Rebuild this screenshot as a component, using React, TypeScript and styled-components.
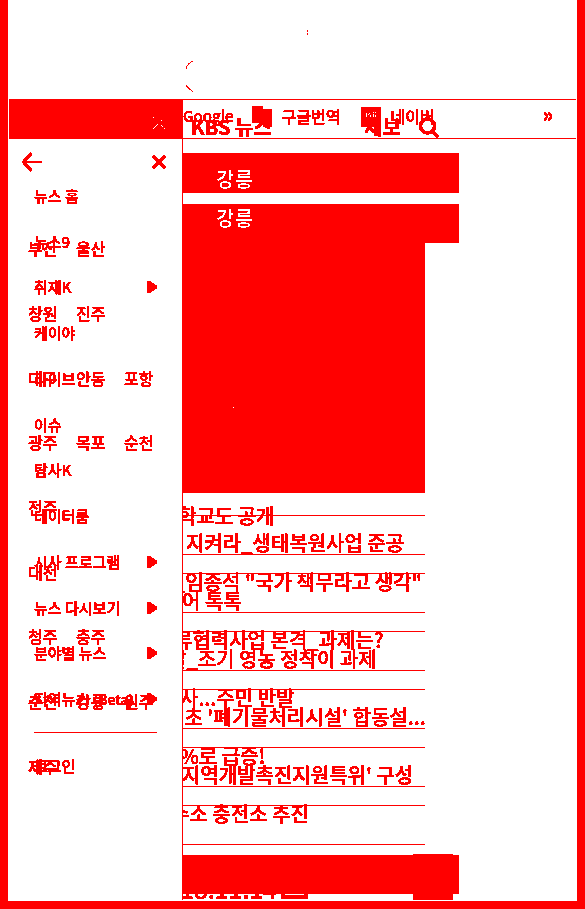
import React from "react";
import styled, { createGlobalStyle } from "styled-components";

const RED = "#ff0000";

const Global = createGlobalStyle`
  * { box-sizing: border-box; }
  body { margin: 0; background: #fff; }
  h1, h2, p, ul { margin: 0; padding: 0; font-weight: inherit; }
  ul { list-style: none; }
  a { color: inherit; text-decoration: none; }
  button { border: 0; padding: 0; background: none; color: inherit; font: inherit; display: flex; }
  svg { display: block; flex: none; }
`;

const Shell = styled.div`
  position: relative;
  display: flex;
  flex-direction: column;
  min-height: 100vh;
  overflow: hidden;
  padding: 0 1px 1px;
  border: solid ${RED};
  border-width: 0 8px 8px;
  background: #fff;
  color: ${RED};
  font-family: "Noto Sans CJK KR", "Noto Sans", sans-serif;
  font-weight: 500;
  filter: url(#two-tone);
`;

const Defs = styled.svg`
  position: absolute;
  width: 0;
  height: 0;
`;

const Masthead = styled.div`
  flex: none;
  height: 99px;
  padding: 30px 0 0 177px;
`;

const Toolbar = styled.header`
  position: relative;
  flex: none;
  display: flex;
  height: 40px;
  border: solid ${RED};
  border-width: 1px 0;
`;

const ToolbarPanel = styled.div`
  flex: none;
  width: 174px;
  padding: 17px 17px 0 0;
  display: flex;
  justify-content: flex-end;
  background: ${RED};
  color: #fff;
`;

const Translate = styled.nav`
  flex: 1;
  display: flex;
  align-items: center;
  height: 34px;
  font-size: 16px;
  line-height: 24px;
  white-space: nowrap;
`;

const TranslateLink = styled.a<{ $gap: number; $small?: boolean }>`
  height: 26px;
  margin-right: ${(p) => p.$gap}px;
  font-size: ${(p) => (p.$small ? 15 : 16)}px;
`;

const More = styled.button`
  && {
    height: 30px;
    margin: 0 23px 0 auto;
    font-size: 20px;
    font-weight: 700;
  }
`;

const Brand = styled.div`
  position: absolute;
  top: 12px;
  left: 182px;
  width: 248px;
  display: flex;
  align-items: center;
  font-size: 20px;
  line-height: 30px;
  white-space: nowrap;
`;

const BrandName = styled.h1`
  font-size: 20px;
  font-weight: 700;
`;

const Report = styled.a`
  margin: 0 18px 0 auto;
  font-weight: 700;
`;

const IconGap = styled.span`
  margin-right: 10px;
`;

const Content = styled.main`
  flex: 1;
  display: flex;
  flex-direction: column;
  min-height: 0;
  padding-top: 14px;
  margin-left: 174px;
  margin-right: 117px;
  white-space: nowrap;
`;

const Tab = styled.a<{ $top: number }>`
  flex: none;
  height: 40px;
  margin-bottom: 11px;
  padding: ${(p) => p.$top}px 0 0 33px;
  background: ${RED};
  color: #fff;
  font-size: 20px;
  font-weight: 700;
  line-height: 28px;
  overflow: hidden;
  &:nth-of-type(2) { margin-bottom: 0; height: 39px; }
`;

const Column = styled.div`
  height: 611px;
  margin-right: 34px;
`;

const Photo = styled.div`
  height: 250px;
  padding: 164px 0 0 50px;
  background: ${RED};
`;

const Dot = styled.div`
  width: 1px;
  height: 1px;
  background: #fff;
`;

const Lead = styled.p<{ $start: number }>`
  height: 22px;
  padding-top: 9px;
  margin-left: ${(p) => p.$start}px;
  font-size: 20px;
  line-height: 28px;
`;

const Story = styled.li<{ $single: boolean }>`
  height: 40px;
  margin-bottom: 18px;
  padding-top: ${(p) => (p.$single ? 19 : 0)}px;
  border: solid ${RED};
  border-width: 1px 0;
`;

const Line = styled.a<{ $start: number }>`
  display: block;
  height: 19px;
  margin-left: ${(p) => p.$start}px;
  font-size: 20px;
  line-height: 15px;
`;

const Footer = styled.footer`
  position: relative;
  flex: none;
  height: 46px;
  margin-left: 174px;
  overflow: hidden;
`;

const FooterBar = styled.div`
  position: absolute;
  top: 1px;
  left: 0;
  width: 276px;
  height: 39px;
  background: ${RED};
`;

const TopButton = styled.button`
  && {
    position: absolute;
    top: 0;
    left: 230px;
    width: 40px;
    height: 46px;
    background: ${RED};
  }
`;

const DateRow = styled.div`
  display: flex;
  align-items: flex-end;
  gap: 4px;
  height: 46px;
  margin-left: -30px;
  font-size: 24px;
  line-height: 32px;
`;

const DateText = styled.span`
  height: 27px;
`;

const Drawer = styled.aside`
  position: absolute;
  top: 139px;
  bottom: 1px;
  left: 1px;
  width: 174px;
  background: #fff;
  border-right: 1px solid ${RED};
`;

const DrawerHead = styled.div`
  display: flex;
  justify-content: space-between;
  align-items: center;
  height: 34px;
  padding: 11px 16px 0 12px;
`;

const Layers = styled.div`
  display: grid;
  > * { grid-area: 1 / 1; }
`;

const Menu = styled.nav`
  padding: 0 25px;
  font-size: 15px;
  line-height: 22px;
  white-space: nowrap;
`;

const MenuList = styled.ul`
  display: grid;
  grid-auto-rows: 1fr;
  height: 549px;
`;

const MenuItem = styled.li`
  display: flex;
  align-items: center;
  justify-content: space-between;
`;

const Beta = styled.small`
  margin-left: 4px;
  font-size: 14px;
`;

const Login = styled.a`
  display: block;
  margin-top: 10px;
  padding-top: 22px;
  border-top: 1px solid ${RED};
`;

const Regions = styled.ul`
  display: grid;
  grid-auto-rows: 1fr;
  height: 582px;
  margin-top: 43px;
  padding-left: 19px;
  font-size: 16px;
  line-height: 24px;
  pointer-events: none;
`;

const Region = styled.li`
  display: grid;
  grid-template-columns: 48px 48px 30px;
  align-items: center;
  white-space: nowrap;
  a { pointer-events: auto; }
`;

const menu: { label: string; more?: boolean; beta?: boolean }[] = [
  { label: "뉴스 홈" },
  { label: "뉴스9" },
  { label: "취재K", more: true },
  { label: "케이야" },
  { label: "라이브" },
  { label: "이슈" },
  { label: "탐사K" },
  { label: "데이터룸" },
  { label: "시사 프로그램", more: true },
  { label: "뉴스 다시보기", more: true },
  { label: "분야별 뉴스", more: true },
  { label: "지역뉴스", more: true, beta: true },
];

const regions = [
  ["부산", "울산"],
  ["창원", "진주"],
  ["대구", "안동", "포항"],
  ["광주", "목포", "순천"],
  ["전주"],
  ["대전"],
  ["청주", "충주"],
  ["춘천", "강릉", "원주"],
  ["제주"],
];

const stories: { text: string; start: number }[][] = [
  [{ text: "지켜라_생태복원사업 준공", start: 3 }],
  [
    { text: "_임종석 \"국가 책무라고 생각\"", start: -9 },
    { text: "어 톡톡", start: -1 },
  ],
  [
    { text: "류협력사업 본격_과제는?", start: -9 },
    { text: "달_조기 영농 정착이 과제", start: -15 },
  ],
  [
    { text: "사...주민 반발", start: -3 },
    { text: "최초 '폐기물처리시설' 합동설...", start: -17 },
  ],
  [
    { text: "%로 급증!", start: -3 },
    { text: "'지역개발촉진지원특위' 구성", start: -7 },
  ],
  [{ text: "수소 충전소 추진", start: -12 }],
];

const Triangle = () => (
  <svg width="10" height="12" viewBox="0 0 10 12" fill="currentColor">
    <path d="M0 0h2l8 5v2l-8 5H0z" />
  </svg>
);

export default function App() {
  return (
    <>
      <Global />
      <Defs aria-hidden="true">
        <filter id="two-tone" x="0" y="0" width="100%" height="100%" colorInterpolationFilters="sRGB">
          <feComponentTransfer>
            <feFuncG type="discrete" tableValues="0 0 0 0 0 0 0 0 1" />
            <feFuncB type="discrete" tableValues="0 0 0 0 0 0 0 0 1" />
          </feComponentTransfer>
        </filter>
      </Defs>
      <Shell>
        <Masthead>
          <svg width="124" height="62" viewBox="0 0 124 62" fill="none" stroke={RED} shapeRendering="crispEdges">
            <path d="M121.500 0v2M121.500 3v2" />
            <path d="M.5 39v-2l2-3 4-3M0 55.500l3 3 4 3" />
          </svg>
        </Masthead>

        <Toolbar>
          <ToolbarPanel>
            <svg width="14" height="14" viewBox="0 0 14 14" fill="#fff" shapeRendering="crispEdges">
              <path d="M1 0h1v1H1zM9 3h1v1H9zM5 7h1v1H5zM4 8h1v1H4zM3 9h1v1H3zM2 10h1v1H2zM1 11h1v1H1zM9 8h1v1H9zM10 9h1v1h-1zM12 11h1v1h-1z" />
            </svg>
          </ToolbarPanel>
          <Translate aria-label="번역">
            <TranslateLink href="#google" $gap={18} $small>Google</TranslateLink>
            <IconGap>
              <svg width="20" height="22" viewBox="0 0 20 22" fill="currentColor">
                <path d="M1 0h9l1 3h9v18h-8l-2-4H0V1z" />
              </svg>
            </IconGap>
            <TranslateLink href="#translate" $gap={20}>구글번역</TranslateLink>
            <IconGap>
              <svg width="20" height="20" viewBox="0 0 20 20" shapeRendering="crispEdges">
                <path fill={RED} d="M0 0h20v20H0z" />
                <path fill="#fff" d="M5 6h1v4H5zM8 6h1v1H8zM9 8h1v2H9zM7 7h1v1H7zM12 5h1v1h-1zM14 5h1v1h-1zM12 7h1v3h-1zM14 8h1v2h-1z" />
              </svg>
            </IconGap>
            <TranslateLink href="#naver" $gap={0}>네이버</TranslateLink>
            <More type="button" aria-label="더보기">»</More>
          </Translate>
          <Brand>
            <BrandName>KBS 뉴스</BrandName>
            <Report href="#report">제보</Report>
            <button type="button" aria-label="검색">
              <svg width="20" height="21" viewBox="0 0 20 21" fill="none" stroke="currentColor" strokeWidth="3">
                <circle cx="8.500" cy="9" r="7" />
                <path d="M13 14l6 6" />
              </svg>
            </button>
          </Brand>
        </Toolbar>

        <Content>
          <Tab href="#region" $top={12}>강릉</Tab>
          <Tab href="#gangneung" $top={0}>강릉</Tab>
          <Column>
            <Photo><Dot /></Photo>
            <Lead $start={-5}>학교도 공개</Lead>
            <ul>
              {stories.map((lines, i) => (
                <Story key={i} $single={i === 0}>
                  {lines.map((l) => (
                    <Line key={l.text} href="#story" $start={l.start}>{l.text}</Line>
                  ))}
                </Story>
              ))}
            </ul>
          </Column>
        </Content>

        <Footer>
          <DateRow>
            <DateText>2018.11.14</DateText>
            <svg width="27" height="26" viewBox="0 0 27 26" fill="none" stroke="currentColor" strokeWidth="3">
              <path d="M2 1v22h23V1" />
            </svg>
          </DateRow>
          <FooterBar />
          <TopButton type="button" aria-label="맨 위로" />
        </Footer>

        <Drawer>
          <DrawerHead>
            <button type="button" aria-label="뒤로">
              <svg width="22" height="20" viewBox="0 0 22 20" fill="none" stroke="currentColor" strokeWidth="2">
                <path d="M10 1l-8 9 8 9M2 10h19M3 10l7 8M3 10l7-8" />
              </svg>
            </button>
            <button type="button" aria-label="닫기">
              <svg width="14" height="14" viewBox="0 0 14 14" fill="none" stroke="currentColor" strokeWidth="3">
                <path d="M1 1l12 12M13 1L1 13" />
              </svg>
            </button>
          </DrawerHead>
          <Layers>
            <Menu>
              <MenuList>
                {menu.map((m) => (
                  <MenuItem key={m.label}>
                    <a href="#menu">{m.label}{m.beta && <Beta>(Beta)</Beta>}</a>
                    {m.more && <Triangle />}
                  </MenuItem>
                ))}
              </MenuList>
              <Login href="#login">로그인</Login>
            </Menu>
            <Regions>
              {regions.map((r) => (
                <Region key={r[0]}>
                  {r.map((name) => <a key={name} href="#region">{name}</a>)}
                </Region>
              ))}
            </Regions>
          </Layers>
        </Drawer>
      </Shell>
    </>
  );
}
